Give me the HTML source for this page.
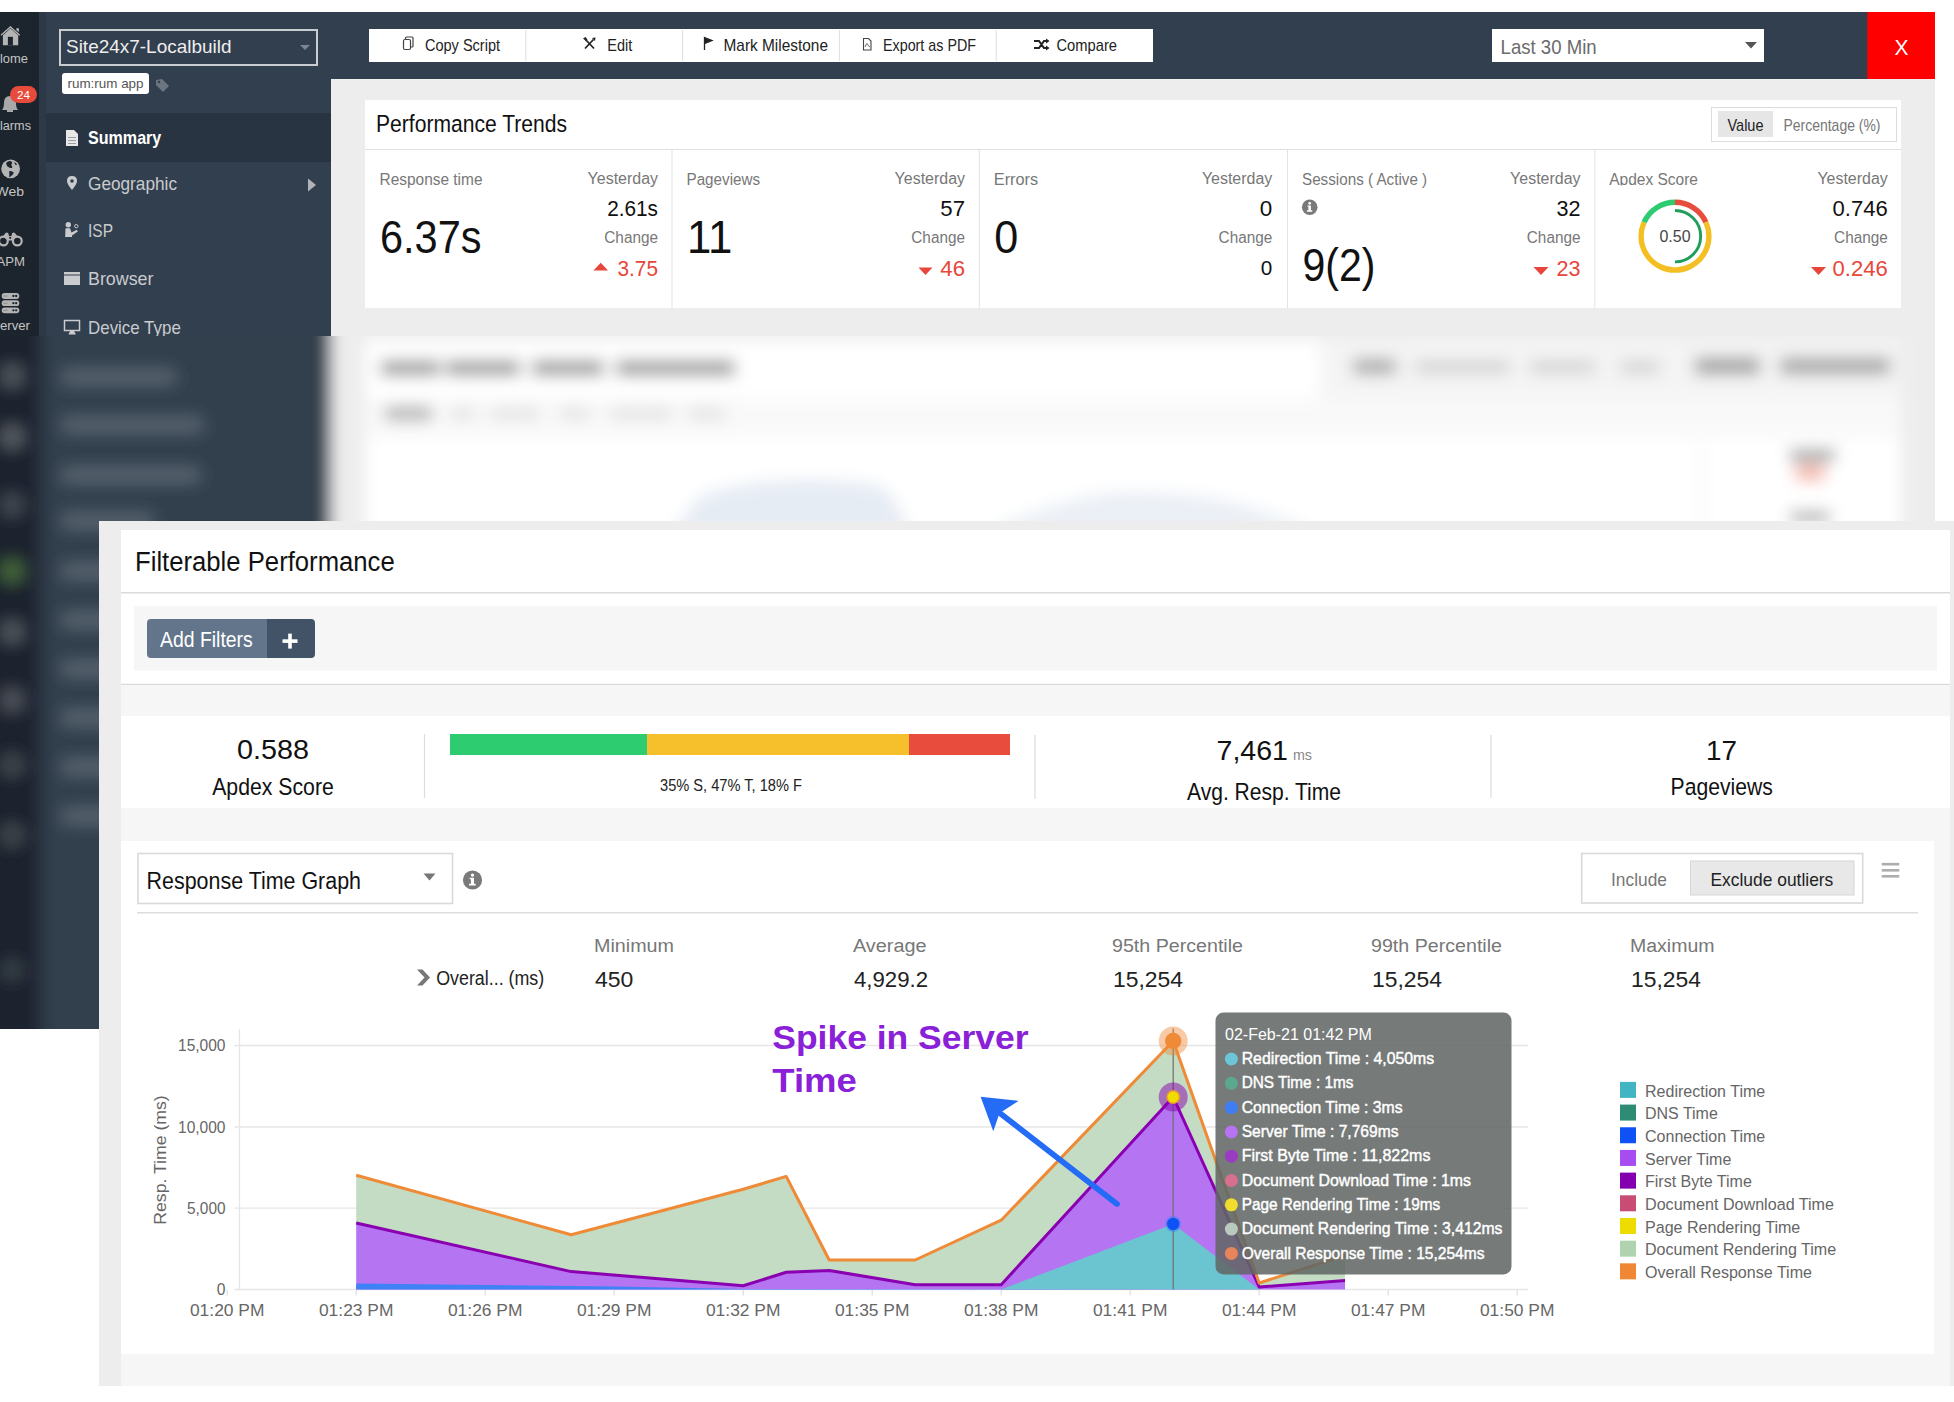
<!DOCTYPE html><html><head><meta charset="utf-8"><title>Site24x7 RUM</title><style>html,body{margin:0;padding:0;background:#fff;overflow:hidden;width:1954px;height:1402px}svg{display:block;font-family:"Liberation Sans",sans-serif}</style></head><body><svg width="1954" height="1402" viewBox="0 0 1954 1402" font-family="Liberation Sans, sans-serif"><rect x="0" y="12" width="1935" height="1017" fill="#323f4e" />
<rect x="0" y="12" width="39" height="1017" fill="#1c242d" />
<rect x="39" y="12" width="7" height="1017" fill="#2d3947" />
<rect x="331" y="79" width="1604" height="950" fill="#ededed" />
<rect x="46" y="113" width="285" height="49" fill="#283441" />
<path d="M2.9 45.3 L2.9 35.2 L10.4 28.6 L18.2 35.2 L18.2 45.3 Z" fill="#b4b4b4" stroke="none" stroke-width="1" />
<rect x="7.9" y="36.8" width="5" height="8.5" fill="#1c242d" />
<path d="M1 35.2 L10.4 27 L19.7 35.2" fill="none" stroke="#b4b4b4" stroke-width="1.4" />
<path d="M16.3 28.2 L18.9 28.2 L18.9 32.2 L16.3 30 Z" fill="#b4b4b4" stroke="none" stroke-width="1" />
<text x="0" y="63" font-size="12.50" fill="#c4c4c4" textLength="28" lengthAdjust="spacingAndGlyphs" >lome</text>
<path d="M2 110 Q4 108 4 103 Q4 96 10 96 Q16 96 16 103 Q16 108 18 110 Z" fill="#a9a9a9" stroke="none" stroke-width="1" />
<rect x="7" y="110" width="6" height="2" fill="#a9a9a9" />
<rect x="10" y="86" width="27" height="17" fill="#e64b3b" rx="8.5" />
<text x="23.5" y="99" font-size="11.50" fill="#fff" text-anchor="middle" textLength="13" lengthAdjust="spacingAndGlyphs" >24</text>
<text x="0" y="130" font-size="12.50" fill="#c4c4c4" textLength="31" lengthAdjust="spacingAndGlyphs" >larms</text>
<circle cx="10.6" cy="168.8" r="9.4" fill="#b4b4b4" />
<path d="M6.5 162.5 Q8 160.8 10.5 161 Q12.5 161.8 12.2 163.5 Q11 164.2 11.5 165.5 Q12.8 166.5 12 168 Q10 168.3 9 167.2 Q7.2 166.8 6.6 165 Q6 163.8 6.5 162.5 Z" fill="#1c242d" stroke="none" stroke-width="1" />
<path d="M9.5 171 Q12 170.6 13.8 172.5 Q13.5 174.5 11.5 175.8 L9.2 177.5 Q9.5 174.5 9.2 172.5 Z" fill="#1c242d" stroke="none" stroke-width="1" />
<path d="M14 162 Q16 162.5 17.2 164.8 L15.5 165 Z" fill="#1c242d" stroke="none" stroke-width="1" />
<text x="-4.5" y="196" font-size="12.50" fill="#c4c4c4" textLength="28.5" lengthAdjust="spacingAndGlyphs" >Web</text>
<circle cx="3.4" cy="241" r="4.4" fill="none" stroke="#b4b4b4" stroke-width="2.2"/>
<circle cx="17.3" cy="241" r="4.4" fill="none" stroke="#b4b4b4" stroke-width="2.2"/>
<path d="M3 236.5 L5.5 233 Q6.8 231.8 8.2 233 L9 236 L11.4 236 L12.2 233 Q13.6 231.8 14.9 233 L17.5 236.5 L12 240.5 L8.5 240.5 Z" fill="#b4b4b4" stroke="none" stroke-width="1" />
<circle cx="10.2" cy="237.8" r="1.1" fill="#1c242d" />
<text x="-3.5" y="265.7" font-size="12.50" fill="#c4c4c4" textLength="28.5" lengthAdjust="spacingAndGlyphs" >APM</text>
<rect x="1.7" y="293.1" width="17.6" height="5.8" fill="#b4b4b4" rx="2.9" />
<circle cx="13.4" cy="296.0" r="1.15" fill="#1c242d" />
<circle cx="16.2" cy="296.0" r="1.15" fill="#1c242d" />
<rect x="3.5" y="295.5" width="4" height="1" fill="#8a8a8a" />
<rect x="1.7" y="300.3" width="17.6" height="5.8" fill="#b4b4b4" rx="2.9" />
<circle cx="13.4" cy="303.2" r="1.15" fill="#1c242d" />
<circle cx="16.2" cy="303.2" r="1.15" fill="#1c242d" />
<rect x="3.5" y="302.7" width="4" height="1" fill="#8a8a8a" />
<rect x="1.7" y="307.4" width="17.6" height="5.8" fill="#b4b4b4" rx="2.9" />
<circle cx="13.4" cy="310.29999999999995" r="1.15" fill="#1c242d" />
<circle cx="16.2" cy="310.29999999999995" r="1.15" fill="#1c242d" />
<rect x="3.5" y="309.79999999999995" width="4" height="1" fill="#8a8a8a" />
<text x="0" y="329.5" font-size="12.50" fill="#c4c4c4" textLength="30" lengthAdjust="spacingAndGlyphs" >erver</text>
<rect x="60" y="30" width="257" height="35" fill="none" stroke="#c9ccd0" stroke-width="2"/>
<text x="66" y="53" font-size="19.04" fill="#eeeeee" textLength="165.5" lengthAdjust="spacingAndGlyphs" >Site24x7-Localbuild</text>
<path d="M300 45 L310 45 L305 50 Z" fill="#7d8690" stroke="none" stroke-width="1" />
<rect x="62" y="73" width="87" height="21" fill="#ffffff" rx="3" />
<text x="67.5" y="88" font-size="13.50" fill="#555" textLength="76" lengthAdjust="spacingAndGlyphs" >rum:rum app</text>
<path d="M156 80 L162 79 L169 86 L163 92 L156 85 Z" fill="#6b7580" stroke="none" stroke-width="1" />
<circle cx="159" cy="82" r="1.2" fill="#323f4e" />
<text x="88" y="144" font-size="17.73" fill="#ffffff" textLength="73.3" lengthAdjust="spacingAndGlyphs" font-weight="bold" >Summary</text>
<path d="M66 130 L74 130 L78 134 L78 146 L66 146 Z" fill="#e8e8e8" stroke="none" stroke-width="1" />
<rect x="68" y="137" width="8" height="1" fill="#9aa0a6" />
<rect x="68" y="140" width="8" height="1" fill="#9aa0a6" />
<rect x="68" y="143" width="8" height="1" fill="#9aa0a6" />
<text x="88" y="190" font-size="17.73" fill="#c9cbce" textLength="89" lengthAdjust="spacingAndGlyphs" >Geographic</text>
<path d="M72 176 Q77 176 77 181 Q77 184 72 190 Q67 184 67 181 Q67 176 72 176 Z" fill="#c9cbce" stroke="none" stroke-width="1" />
<circle cx="72" cy="181" r="1.8" fill="#323f4e" />
<path d="M308 178.5 L316 185 L308 191.5 Z" fill="#b0b4b8" stroke="none" stroke-width="1" />
<text x="88" y="237" font-size="17.73" fill="#c9cbce" textLength="25" lengthAdjust="spacingAndGlyphs" >ISP</text>
<circle cx="68.3" cy="224.8" r="2.7" fill="#c9cbce" />
<path d="M65.5 228.2 L70 228.2 L71.5 232.5 L76.8 229.8 L77.8 231.4 L72 235.5 L72 237 L65.2 237 Z" fill="#c9cbce" stroke="none" stroke-width="1" />
<circle cx="76.3" cy="226.2" r="1.7" fill="none" stroke="#c9cbce" stroke-width="1"/>
<text x="88" y="285" font-size="17.73" fill="#c9cbce" textLength="65.5" lengthAdjust="spacingAndGlyphs" >Browser</text>
<rect x="64" y="272" width="16" height="13" fill="#c9cbce" />
<rect x="64" y="274.5" width="16" height="1" fill="#323f4e" />
<text x="88" y="334" font-size="17.73" fill="#c9cbce" textLength="92.8" lengthAdjust="spacingAndGlyphs" >Device Type</text>
<rect x="64.5" y="320.5" width="15" height="10" fill="none" stroke="#c9cbce" stroke-width="1.5"/>
<path d="M70 331 L74 331 L76 334.6 L68.5 334.6 Z" fill="#c9cbce" stroke="none" stroke-width="1" />
<rect x="369" y="29" width="784" height="33" fill="#ffffff" />
<line x1="525.8" y1="30" x2="525.8" y2="61" stroke="#dedede" stroke-width="1" />
<line x1="682.6" y1="30" x2="682.6" y2="61" stroke="#dedede" stroke-width="1" />
<line x1="839.4000000000001" y1="30" x2="839.4000000000001" y2="61" stroke="#dedede" stroke-width="1" />
<line x1="996.2" y1="30" x2="996.2" y2="61" stroke="#dedede" stroke-width="1" />
<text x="425" y="50.8" font-size="15.99" fill="#222" textLength="75" lengthAdjust="spacingAndGlyphs" >Copy Script</text>
<text x="607.3" y="50.8" font-size="15.99" fill="#222" textLength="25" lengthAdjust="spacingAndGlyphs" >Edit</text>
<text x="723.5" y="50.8" font-size="15.99" fill="#222" textLength="104.5" lengthAdjust="spacingAndGlyphs" >Mark Milestone</text>
<text x="883" y="50.8" font-size="15.99" fill="#222" textLength="93" lengthAdjust="spacingAndGlyphs" >Export as PDF</text>
<text x="1056.5" y="50.8" font-size="15.99" fill="#222" textLength="60.5" lengthAdjust="spacingAndGlyphs" >Compare</text>
<rect x="403.5" y="39.5" width="7" height="10" fill="#fff" rx="1.5" stroke="#444" stroke-width="1.2"/>
<path d="M405.5 39.5 L405.5 38 Q405.5 37 406.5 37 L412 37 Q413 37 413 38 L413 46 Q413 47 412 47 L410.5 47" fill="none" stroke="#444" stroke-width="1.2" />
<path d="M585.5 39.5 L594 48.5 M585 48.5 L593.5 39.5" fill="none" stroke="#222" stroke-width="1.7" />
<path d="M583 38.5 L585.5 37 L587.5 39.5 L586 41 Z M592 38 L595.5 37.5 L595 41 Z" fill="#222" stroke="none" stroke-width="1" />
<path d="M704.5 37 L704.5 50 M704.5 37.5 L712 40.5 L704.5 43.5 Z" fill="#222" stroke="#222" stroke-width="1.3" />
<path d="M863.5 38.5 L868.5 38.5 L871 41 L871 50 L863.5 50 Z" fill="none" stroke="#444" stroke-width="1.1" />
<path d="M865 47 Q867 42 867.5 44 Q868 46 870 47" fill="none" stroke="#444" stroke-width="0.8" />
<path d="M1034 41 L1039 41 L1044 48 L1048 48 M1034 48 L1039 48 L1044 41 L1048 41" fill="none" stroke="#222" stroke-width="2" />
<path d="M1046 38.5 L1049.5 41 L1046 43.5 Z M1046 45.5 L1049.5 48 L1046 50.5 Z" fill="#222" stroke="none" stroke-width="1" />
<rect x="1492" y="29" width="272" height="33" fill="#ffffff" />
<text x="1500.6" y="53.5" font-size="20.06" fill="#6b6b6b" textLength="96" lengthAdjust="spacingAndGlyphs" >Last 30 Min</text>
<path d="M1745 42 L1757 42 L1751 48.5 Z" fill="#555" stroke="none" stroke-width="1" />
<rect x="1867.3" y="12" width="67.7" height="67" fill="#ff0000" />
<text x="1901.5" y="55" font-size="22.97" fill="#ffffff" text-anchor="middle" textLength="14" lengthAdjust="spacingAndGlyphs" >X</text>
<rect x="365" y="100" width="1536" height="208" fill="#ffffff" />
<text x="376" y="132" font-size="23.55" fill="#111" textLength="191" lengthAdjust="spacingAndGlyphs" >Performance Trends</text>
<line x1="365" y1="149.5" x2="1901" y2="149.5" stroke="#e0e0e0" stroke-width="1" />
<line x1="672" y1="150" x2="672" y2="308" stroke="#e3e3e3" stroke-width="1" />
<line x1="979.3" y1="150" x2="979.3" y2="308" stroke="#e3e3e3" stroke-width="1" />
<line x1="1287.5" y1="150" x2="1287.5" y2="308" stroke="#e3e3e3" stroke-width="1" />
<line x1="1594.8" y1="150" x2="1594.8" y2="308" stroke="#e3e3e3" stroke-width="1" />
<rect x="1711.5" y="107.5" width="185" height="34" fill="#fff" stroke="#dcdcdc" stroke-width="1"/>
<rect x="1718" y="111" width="55" height="26" fill="#e6e6e6" />
<text x="1727.5" y="130.5" font-size="15.70" fill="#222" textLength="36" lengthAdjust="spacingAndGlyphs" >Value</text>
<text x="1783.5" y="130.5" font-size="15.70" fill="#777" textLength="97" lengthAdjust="spacingAndGlyphs" >Percentage (%)</text>
<text x="379.5" y="185" font-size="16.42" fill="#777" textLength="103" lengthAdjust="spacingAndGlyphs" >Response time</text>
<text x="658" y="184" font-size="16.42" fill="#777" text-anchor="end" textLength="70.4" lengthAdjust="spacingAndGlyphs" >Yesterday</text>
<text x="658" y="216" font-size="21.37" fill="#111" text-anchor="end" textLength="50.8" lengthAdjust="spacingAndGlyphs" >2.61s</text>
<text x="658" y="243" font-size="16.42" fill="#777" text-anchor="end" textLength="53.7" lengthAdjust="spacingAndGlyphs" >Change</text>
<text x="658" y="276" font-size="22.53" fill="#e8463a" text-anchor="end" textLength="40.5" lengthAdjust="spacingAndGlyphs" >3.75</text>
<text x="380" y="253" font-size="45.93" fill="#111" textLength="101.5" lengthAdjust="spacingAndGlyphs" >6.37s</text>
<path d="M593.5 270.5 L608 270.5 L600.75 262.8 Z" fill="#e8463a" stroke="none" stroke-width="1" />
<text x="686.5" y="185" font-size="16.42" fill="#777" textLength="73.6" lengthAdjust="spacingAndGlyphs" >Pageviews</text>
<text x="965" y="184" font-size="16.42" fill="#777" text-anchor="end" textLength="70.4" lengthAdjust="spacingAndGlyphs" >Yesterday</text>
<text x="965" y="216" font-size="21.37" fill="#111" text-anchor="end" textLength="24.7" lengthAdjust="spacingAndGlyphs" >57</text>
<text x="965" y="243" font-size="16.42" fill="#777" text-anchor="end" textLength="53.7" lengthAdjust="spacingAndGlyphs" >Change</text>
<text x="965" y="276" font-size="22.53" fill="#e8463a" text-anchor="end" textLength="24.7" lengthAdjust="spacingAndGlyphs" >46</text>
<text x="687" y="253" font-size="45.93" fill="#111" textLength="45.4" lengthAdjust="spacingAndGlyphs" >11</text>
<path d="M918.5 267.5 L932.5 267.5 L925.5 275 Z" fill="#e8463a" stroke="none" stroke-width="1" />
<text x="993.8" y="185" font-size="16.42" fill="#777" textLength="44.4" lengthAdjust="spacingAndGlyphs" >Errors</text>
<text x="1272.3" y="184" font-size="16.42" fill="#777" text-anchor="end" textLength="70.4" lengthAdjust="spacingAndGlyphs" >Yesterday</text>
<text x="1272.3" y="216" font-size="21.37" fill="#111" text-anchor="end" textLength="12.5" lengthAdjust="spacingAndGlyphs" >0</text>
<text x="1272.3" y="243" font-size="16.42" fill="#777" text-anchor="end" textLength="53.7" lengthAdjust="spacingAndGlyphs" >Change</text>
<text x="1272.3" y="275" font-size="19.62" fill="#111" text-anchor="end" textLength="11.5" lengthAdjust="spacingAndGlyphs" >0</text>
<text x="994.3" y="253" font-size="45.93" fill="#111" textLength="24" lengthAdjust="spacingAndGlyphs" >0</text>
<text x="1302.0" y="185" font-size="16.42" fill="#777" textLength="125.2" lengthAdjust="spacingAndGlyphs" >Sessions ( Active )</text>
<text x="1580.5" y="184" font-size="16.42" fill="#777" text-anchor="end" textLength="70.4" lengthAdjust="spacingAndGlyphs" >Yesterday</text>
<text x="1580.5" y="216" font-size="21.37" fill="#111" text-anchor="end" textLength="24" lengthAdjust="spacingAndGlyphs" >32</text>
<text x="1580.5" y="243" font-size="16.42" fill="#777" text-anchor="end" textLength="53.7" lengthAdjust="spacingAndGlyphs" >Change</text>
<text x="1580.5" y="276" font-size="22.53" fill="#e8463a" text-anchor="end" textLength="24" lengthAdjust="spacingAndGlyphs" >23</text>
<text x="1302.5" y="281.4" font-size="45.93" fill="#111" textLength="73" lengthAdjust="spacingAndGlyphs" >9(2)</text>
<circle cx="1309.7" cy="207.3" r="7.8" fill="#7a7a7a" />
<circle cx="1309.7" cy="203.3" r="1.35" fill="#fff" />
<path d="M1307.40 205.40 L1310.90 205.40 L1310.90 210.30 L1312.30 210.30 L1312.30 211.70 L1306.90 211.70 L1306.90 210.30 L1308.40 210.30 L1308.40 206.60 L1307.40 206.60 Z" fill="#fff" stroke="none" stroke-width="1" />
<path d="M1533.5 267 L1548.5 267 L1541 275 Z" fill="#e8463a" stroke="none" stroke-width="1" />
<clipPath id="apc"><rect x="1595" y="150" width="120" height="35.6"/></clipPath>
<text x="1609.3" y="185" font-size="16.42" fill="#777" textLength="88.6" lengthAdjust="spacingAndGlyphs" clip-path="url(#apc)">Apdex Score</text>
<text x="1887.8" y="184" font-size="16.42" fill="#777" text-anchor="end" textLength="70.4" lengthAdjust="spacingAndGlyphs" >Yesterday</text>
<text x="1887.8" y="216" font-size="21.37" fill="#111" text-anchor="end" textLength="55.2" lengthAdjust="spacingAndGlyphs" >0.746</text>
<text x="1887.8" y="243" font-size="16.42" fill="#777" text-anchor="end" textLength="53.7" lengthAdjust="spacingAndGlyphs" >Change</text>
<text x="1887.8" y="276" font-size="22.53" fill="#e8463a" text-anchor="end" textLength="55.2" lengthAdjust="spacingAndGlyphs" >0.246</text>
<path d="M1811 267 L1826 267 L1818.5 275 Z" fill="#e8463a" stroke="none" stroke-width="1" />
<path d="M1675.00 202.30 A33.9 33.9 0 0 1 1705.90 222.25" fill="none" stroke="#e74c3c" stroke-width="5.4" />
<path d="M1705.90 222.25 A33.9 33.9 0 1 1 1644.10 222.25" fill="none" stroke="#f4bf22" stroke-width="5.4" />
<path d="M1644.10 222.25 A33.9 33.9 0 0 1 1675.00 202.30" fill="none" stroke="#2ecc71" stroke-width="5.4" />
<path d="M1675.00 210.50 A25.7 25.7 0 0 1 1675.00 261.90" fill="none" stroke="#1e9e5a" stroke-width="2.9" />
<text x="1675" y="241.8" font-size="16.42" fill="#444" text-anchor="middle" textLength="31" lengthAdjust="spacingAndGlyphs" >0.50</text>
<defs><filter id="bl" x="-5%" y="-5%" width="110%" height="110%"><feGaussianBlur stdDeviation="8"/></filter><clipPath id="blc"><rect x="0" y="336" width="1935" height="692.5"/></clipPath><clipPath id="chartclip"><rect x="239.5" y="1000" width="1105.7" height="300"/></clipPath></defs>
<g clip-path="url(#blc)"><g filter="url(#bl)">
<rect x="-40" y="12" width="2015" height="1057" fill="#323f4e" />
<rect x="-40" y="12" width="79" height="1057" fill="#1c242d" />
<rect x="39" y="12" width="7" height="1057" fill="#2d3947" />
<rect x="331" y="79" width="1644" height="990" fill="#ededed" />
<rect x="39" y="12" width="7" height="1017" fill="#2d3947" />
<rect x="62" y="370" width="113" height="14" fill="#5a6672" rx="3" />
<rect x="62" y="418" width="140" height="14" fill="#5a6672" rx="3" />
<rect x="62" y="468" width="137" height="14" fill="#5a6672" rx="3" />
<rect x="62" y="514" width="90" height="14" fill="#5a6672" rx="3" />
<rect x="62" y="564" width="120" height="14" fill="#5a6672" rx="3" />
<rect x="62" y="613" width="130" height="14" fill="#5a6672" rx="3" />
<rect x="62" y="662" width="120" height="14" fill="#5a6672" rx="3" />
<rect x="62" y="711" width="130" height="14" fill="#5a6672" rx="3" />
<rect x="62" y="760" width="120" height="14" fill="#5a6672" rx="3" />
<rect x="62" y="809" width="90" height="14" fill="#5a6672" rx="3" />
<rect x="1" y="365" width="22" height="22" fill="#50575f" rx="5" />
<rect x="1" y="426" width="22" height="22" fill="#575d65" rx="5" />
<rect x="1" y="494" width="22" height="22" fill="#434a52" rx="5" />
<rect x="1" y="560" width="22" height="22" fill="#44663a" rx="5" />
<rect x="1" y="621" width="22" height="22" fill="#50565e" rx="5" />
<rect x="1" y="689" width="22" height="22" fill="#4d535b" rx="5" />
<rect x="1" y="754" width="22" height="22" fill="#40464d" rx="5" />
<rect x="1" y="824" width="22" height="22" fill="#40464d" rx="5" />
<rect x="1" y="959" width="22" height="22" fill="#363c44" rx="5" />
<rect x="365" y="340" width="1536" height="700" fill="#ffffff" />
<rect x="365" y="398" width="1536" height="40" fill="#f9f9f9" />
<rect x="1320" y="340" width="581" height="58" fill="#f4f4f4" />
<rect x="381" y="361" width="59" height="14" fill="#8a8a8a" rx="2" />
<rect x="446" y="361" width="74" height="14" fill="#8a8a8a" rx="2" />
<rect x="532" y="361" width="72" height="14" fill="#8a8a8a" rx="2" />
<rect x="616" y="361" width="119" height="14" fill="#8a8a8a" rx="2" />
<rect x="385" y="407" width="47" height="13" fill="#a8a8a8" rx="2" />
<rect x="450" y="409" width="25" height="9" fill="#dadada" rx="2" />
<rect x="490" y="409" width="50" height="9" fill="#dadada" rx="2" />
<rect x="560" y="409" width="30" height="9" fill="#dadada" rx="2" />
<rect x="610" y="409" width="62" height="9" fill="#dadada" rx="2" />
<rect x="688" y="409" width="37" height="9" fill="#dadada" rx="2" />
<rect x="1353" y="359" width="43" height="15" fill="#a5a5a5" rx="2" />
<rect x="1415" y="362" width="95" height="10" fill="#c8c8c8" rx="2" />
<rect x="1530" y="362" width="65" height="10" fill="#c8c8c8" rx="2" />
<rect x="1620" y="362" width="40" height="10" fill="#c8c8c8" rx="2" />
<rect x="1695" y="358" width="65" height="16" fill="#9a9a9a" rx="2" />
<rect x="1780" y="358" width="110" height="16" fill="#a0a0a0" rx="2" />
<rect x="1700" y="445" width="2" height="90" fill="#e6e6e6" />
<rect x="1790" y="450" width="45" height="11" fill="#8a8a8a" rx="2" />
<rect x="1795" y="466" width="30" height="14" fill="#f4a89a" rx="2" />
<rect x="1790" y="512" width="40" height="10" fill="#999" rx="2" />
<path d="M670 535 L700 495 Q780 470 880 485 Q900 500 910 535 Z" fill="#e6ecf4" stroke="none" stroke-width="1" />
<path d="M980 535 Q1050 500 1110 492 Q1230 486 1320 535 Z" fill="#ebf0f6" stroke="none" stroke-width="1" />
</g></g>
<rect x="99" y="521" width="1855" height="865" fill="#ededed" />
<rect x="121" y="530" width="1829" height="856" fill="#ffffff" />
<text x="135" y="571.3" font-size="27.62" fill="#111" textLength="259.7" lengthAdjust="spacingAndGlyphs" >Filterable Performance</text>
<line x1="121" y1="592.8" x2="1950" y2="592.8" stroke="#dadada" stroke-width="1.5" />
<rect x="134" y="606" width="1803" height="64.5" fill="#f6f6f6" />
<clipPath id="afc"><rect x="147" y="619" width="168" height="39" rx="4"/></clipPath>
<g clip-path="url(#afc)">
<rect x="147" y="619" width="120" height="39" fill="#63758b" />
<rect x="267" y="619" width="48" height="39" fill="#425367" />
</g>
<text x="160" y="647.4" font-size="21.80" fill="#ffffff" textLength="92.8" lengthAdjust="spacingAndGlyphs" >Add Filters</text>
<rect x="282.5" y="639.3" width="15" height="3.6" fill="#fff" />
<rect x="288.2" y="633.6" width="3.6" height="15" fill="#fff" />
<line x1="121" y1="684.5" x2="1950" y2="684.5" stroke="#dadada" stroke-width="1.5" />
<rect x="121" y="685" width="1829" height="31" fill="#f6f6f6" />
<rect x="121" y="808" width="1829" height="33" fill="#f6f6f6" />
<text x="273" y="759.3" font-size="28.49" fill="#111" text-anchor="middle" textLength="72" lengthAdjust="spacingAndGlyphs" >0.588</text>
<text x="273" y="795.3" font-size="23.26" fill="#111" text-anchor="middle" textLength="121.6" lengthAdjust="spacingAndGlyphs" >Apdex Score</text>
<line x1="424.5" y1="734" x2="424.5" y2="798" stroke="#dddddd" stroke-width="1.2" />
<rect x="450" y="734" width="197" height="21" fill="#2ecc71" />
<rect x="647" y="734" width="262" height="21" fill="#f5c02b" />
<rect x="909" y="734" width="101" height="21" fill="#e74c3c" />
<text x="660" y="790.6" font-size="17.01" fill="#222" textLength="142" lengthAdjust="spacingAndGlyphs" >35% S, 47% T, 18% F</text>
<line x1="1035" y1="735" x2="1035" y2="799" stroke="#dddddd" stroke-width="1.2" />
<text x="1216.5" y="760" font-size="28.49" fill="#111" textLength="71.5" lengthAdjust="spacingAndGlyphs" >7,461</text>
<text x="1293" y="760" font-size="15.50" fill="#888" textLength="19" lengthAdjust="spacingAndGlyphs" >ms</text>
<text x="1187" y="800" font-size="23.26" fill="#111" textLength="154" lengthAdjust="spacingAndGlyphs" >Avg. Resp. Time</text>
<line x1="1491" y1="735" x2="1491" y2="798" stroke="#dddddd" stroke-width="1.2" />
<text x="1706" y="760" font-size="28.49" fill="#111" textLength="31" lengthAdjust="spacingAndGlyphs" >17</text>
<text x="1670.6" y="795" font-size="23.26" fill="#111" textLength="102.2" lengthAdjust="spacingAndGlyphs" >Pageviews</text>
<rect x="1934" y="841" width="16" height="545" fill="#f6f6f6" />
<rect x="121" y="1354" width="1829" height="32" fill="#f6f6f6" />
<rect x="138" y="853.5" width="314.5" height="50" fill="#fff" stroke="#d9d9d9" stroke-width="1.6"/>
<text x="146.6" y="888.5" font-size="24.42" fill="#111" textLength="214.4" lengthAdjust="spacingAndGlyphs" >Response Time Graph</text>
<path d="M423.5 873.5 L435.5 873.5 L429.5 880.5 Z" fill="#777" stroke="none" stroke-width="1" />
<circle cx="472.5" cy="880" r="9.6" fill="#7a7a7a" />
<circle cx="472.5" cy="875.08" r="1.6605" fill="#fff" />
<path d="M469.67 877.66 L473.98 877.66 L473.98 883.69 L475.70 883.69 L475.70 885.41 L469.06 885.41 L469.06 883.69 L470.90 883.69 L470.90 879.14 L469.67 879.14 Z" fill="#fff" stroke="none" stroke-width="1" />
<line x1="137" y1="912.8" x2="1918" y2="912.8" stroke="#dddddd" stroke-width="1.6" />
<rect x="1581.7" y="853.5" width="281" height="49.5" fill="#fff" stroke="#d9d9d9" stroke-width="1.6"/>
<rect x="1690.5" y="861" width="163.5" height="34" fill="#e8e8e8" stroke="#d6d6d6" stroke-width="1"/>
<text x="1611" y="886.2" font-size="18.60" fill="#777" textLength="56" lengthAdjust="spacingAndGlyphs" >Include</text>
<text x="1710.5" y="886.2" font-size="18.60" fill="#222" textLength="122.8" lengthAdjust="spacingAndGlyphs" >Exclude outliers</text>
<rect x="1881.7" y="862.9000000000001" width="17.6" height="2.6" fill="#adadad" />
<rect x="1881.7" y="869.0" width="17.6" height="2.6" fill="#adadad" />
<rect x="1881.7" y="875.0" width="17.6" height="2.6" fill="#adadad" />
<text x="436.2" y="985.4" font-size="19.33" fill="#222" textLength="108" lengthAdjust="spacingAndGlyphs" >Overal... (ms)</text>
<path d="M417 969.5 L422.5 969.5 L430 977.5 L422.5 985.5 L417 985.5 L424.5 977.5 Z" fill="#777" stroke="none" stroke-width="1" />
<text x="594" y="952.2" font-size="19.19" fill="#777" textLength="80" lengthAdjust="spacingAndGlyphs" >Minimum</text>
<text x="595" y="986.8" font-size="21.37" fill="#222" textLength="38.4" lengthAdjust="spacingAndGlyphs" >450</text>
<text x="853" y="952.2" font-size="19.19" fill="#777" textLength="73.5" lengthAdjust="spacingAndGlyphs" >Average</text>
<text x="854" y="986.8" font-size="21.37" fill="#222" textLength="74" lengthAdjust="spacingAndGlyphs" >4,929.2</text>
<text x="1112" y="952.2" font-size="19.19" fill="#777" textLength="131" lengthAdjust="spacingAndGlyphs" >95th Percentile</text>
<text x="1113" y="986.8" font-size="21.37" fill="#222" textLength="70" lengthAdjust="spacingAndGlyphs" >15,254</text>
<text x="1371" y="952.2" font-size="19.19" fill="#777" textLength="131" lengthAdjust="spacingAndGlyphs" >99th Percentile</text>
<text x="1372" y="986.8" font-size="21.37" fill="#222" textLength="70" lengthAdjust="spacingAndGlyphs" >15,254</text>
<text x="1630" y="952.2" font-size="19.19" fill="#777" textLength="84.5" lengthAdjust="spacingAndGlyphs" >Maximum</text>
<text x="1631" y="986.8" font-size="21.37" fill="#222" textLength="70" lengthAdjust="spacingAndGlyphs" >15,254</text>
<line x1="234.5" y1="1045.5" x2="1528" y2="1045.5" stroke="#e6e6e6" stroke-width="1.3" />
<text x="225.5" y="1051.1" font-size="15.84" fill="#666" text-anchor="end" textLength="47.5" lengthAdjust="spacingAndGlyphs" font-family="Liberation Sans" >15,000</text>
<line x1="234.5" y1="1127" x2="1528" y2="1127" stroke="#e6e6e6" stroke-width="1.3" />
<text x="225.5" y="1132.6" font-size="15.84" fill="#666" text-anchor="end" textLength="47.5" lengthAdjust="spacingAndGlyphs" font-family="Liberation Sans" >10,000</text>
<line x1="234.5" y1="1208.2" x2="1528" y2="1208.2" stroke="#e6e6e6" stroke-width="1.3" />
<text x="225.5" y="1213.8" font-size="15.84" fill="#666" text-anchor="end" textLength="38.5" lengthAdjust="spacingAndGlyphs" font-family="Liberation Sans" >5,000</text>
<line x1="234.5" y1="1289.5" x2="1528" y2="1289.5" stroke="#e6e6e6" stroke-width="1.3" />
<text x="225.5" y="1295.1" font-size="15.84" fill="#666" text-anchor="end" textLength="8.7" lengthAdjust="spacingAndGlyphs" font-family="Liberation Sans" >0</text>
<line x1="239.5" y1="1029" x2="239.5" y2="1290" stroke="#e6e6e6" stroke-width="1.3" />
<line x1="227.2" y1="1289.5" x2="227.2" y2="1295.5" stroke="#e0e0e0" stroke-width="1.3" />
<text x="227.2" y="1315.6" font-size="16.86" fill="#666" text-anchor="middle" textLength="74.5" lengthAdjust="spacingAndGlyphs" >01:20 PM</text>
<line x1="356.2" y1="1289.5" x2="356.2" y2="1295.5" stroke="#e0e0e0" stroke-width="1.3" />
<text x="356.2" y="1315.6" font-size="16.86" fill="#666" text-anchor="middle" textLength="74.5" lengthAdjust="spacingAndGlyphs" >01:23 PM</text>
<line x1="485.2" y1="1289.5" x2="485.2" y2="1295.5" stroke="#e0e0e0" stroke-width="1.3" />
<text x="485.2" y="1315.6" font-size="16.86" fill="#666" text-anchor="middle" textLength="74.5" lengthAdjust="spacingAndGlyphs" >01:26 PM</text>
<line x1="614.2" y1="1289.5" x2="614.2" y2="1295.5" stroke="#e0e0e0" stroke-width="1.3" />
<text x="614.2" y="1315.6" font-size="16.86" fill="#666" text-anchor="middle" textLength="74.5" lengthAdjust="spacingAndGlyphs" >01:29 PM</text>
<line x1="743.2" y1="1289.5" x2="743.2" y2="1295.5" stroke="#e0e0e0" stroke-width="1.3" />
<text x="743.2" y="1315.6" font-size="16.86" fill="#666" text-anchor="middle" textLength="74.5" lengthAdjust="spacingAndGlyphs" >01:32 PM</text>
<line x1="872.2" y1="1289.5" x2="872.2" y2="1295.5" stroke="#e0e0e0" stroke-width="1.3" />
<text x="872.2" y="1315.6" font-size="16.86" fill="#666" text-anchor="middle" textLength="74.5" lengthAdjust="spacingAndGlyphs" >01:35 PM</text>
<line x1="1001.2" y1="1289.5" x2="1001.2" y2="1295.5" stroke="#e0e0e0" stroke-width="1.3" />
<text x="1001.2" y="1315.6" font-size="16.86" fill="#666" text-anchor="middle" textLength="74.5" lengthAdjust="spacingAndGlyphs" >01:38 PM</text>
<line x1="1130.2" y1="1289.5" x2="1130.2" y2="1295.5" stroke="#e0e0e0" stroke-width="1.3" />
<text x="1130.2" y="1315.6" font-size="16.86" fill="#666" text-anchor="middle" textLength="74.5" lengthAdjust="spacingAndGlyphs" >01:41 PM</text>
<line x1="1259.2" y1="1289.5" x2="1259.2" y2="1295.5" stroke="#e0e0e0" stroke-width="1.3" />
<text x="1259.2" y="1315.6" font-size="16.86" fill="#666" text-anchor="middle" textLength="74.5" lengthAdjust="spacingAndGlyphs" >01:44 PM</text>
<line x1="1388.2" y1="1289.5" x2="1388.2" y2="1295.5" stroke="#e0e0e0" stroke-width="1.3" />
<text x="1388.2" y="1315.6" font-size="16.86" fill="#666" text-anchor="middle" textLength="74.5" lengthAdjust="spacingAndGlyphs" >01:47 PM</text>
<line x1="1517.2" y1="1289.5" x2="1517.2" y2="1295.5" stroke="#e0e0e0" stroke-width="1.3" />
<text x="1517.2" y="1315.6" font-size="16.86" fill="#666" text-anchor="middle" textLength="74.5" lengthAdjust="spacingAndGlyphs" >01:50 PM</text>
<text x="0" y="0" font-size="17.3" fill="#666" text-anchor="middle" textLength="129.5" lengthAdjust="spacingAndGlyphs" transform="translate(165.8 1160) rotate(-90)">Resp. Time (ms)</text>
<g clip-path="url(#chartclip)">
<path d="M356.2,1175.3 571.2,1234.7 743.2,1189.3 786.2,1176.4 829.2,1260.0 915.2,1260.0 1001.2,1220.2 1173.2,1041.0 1259.2,1283.0 1345.2,1255.3 L1345.2,1280.5 1259.2,1287.0 1173.2,1097.0 1001.2,1284.7 915.2,1284.7 829.2,1270.4 786.2,1272.3 743.2,1285.8 571.2,1271.6 356.2,1223.0 Z" fill="#c3dcc3" stroke="none" stroke-width="1" />
<path d="M356.2,1223.0 571.2,1271.6 743.2,1285.8 786.2,1272.3 829.2,1270.4 915.2,1284.7 1001.2,1284.7 1173.2,1097.0 1259.2,1287.0 1345.2,1280.5 L1345.2,1289.5 356.2,1289.5 Z" fill="#b574f2" stroke="none" stroke-width="1" />
<path d="M356.2,1289.5 1001.2,1289.5 1173.2,1224.0 1259.2,1289.5 1345.2,1289.5 L1345.2,1289.5 356.2,1289.5 Z" fill="#6bc5d0" stroke="none" stroke-width="1" />
<path d="M356.2,1283.4 485.2,1285.0 614.2,1286.6 743.2,1289.0 1345.2,1289.5 L1345.2,1289.5 356.2,1289.5 Z" fill="#3f82f5" stroke="none" stroke-width="1" />
<path d="M356.2,1223.0 571.2,1271.6 743.2,1285.8 786.2,1272.3 829.2,1270.4 915.2,1284.7 1001.2,1284.7 1173.2,1097.0 1259.2,1287.0 1345.2,1280.5" fill="none" stroke="#8a00b0" stroke-width="3" stroke-linejoin="round"/>
<path d="M356.2,1175.3 571.2,1234.7 743.2,1189.3 786.2,1176.4 829.2,1260.0 915.2,1260.0 1001.2,1220.2 1173.2,1041.0 1259.2,1283.0 1345.2,1255.3" fill="none" stroke="#ef8a37" stroke-width="3" stroke-linejoin="round"/>
</g>
<line x1="1173.2" y1="1028.5" x2="1173.2" y2="1289.5" stroke="#6e6e6e" stroke-width="1.2" />
<circle cx="1173.2" cy="1041" r="14.5" fill="#ef8a37" opacity="0.45"/>
<circle cx="1173.2" cy="1041" r="8.2" fill="#ef8a37" />
<circle cx="1173.2" cy="1097" r="14.5" fill="#8a00b0" opacity="0.5"/>
<circle cx="1173.2" cy="1097" r="7" fill="#e99a33" />
<circle cx="1173.2" cy="1097" r="5.5" fill="#f0dc00" />
<circle cx="1173.2" cy="1224" r="8" fill="#3f82f5" opacity="0.5"/>
<circle cx="1173.2" cy="1224" r="6.2" fill="#0d52f5" />
<text x="772.3" y="1048.8" font-size="33.14" fill="#8a20d8" textLength="256.2" lengthAdjust="spacingAndGlyphs" font-weight="bold" >Spike in Server</text>
<text x="772.3" y="1092.4" font-size="33.14" fill="#8a20d8" textLength="84.5" lengthAdjust="spacingAndGlyphs" font-weight="bold" >Time</text>
<line x1="1117" y1="1204" x2="1001" y2="1114" stroke="#246bf5" stroke-width="5.8" stroke-linecap="round"/>
<path d="M980.6 1096.7 L1018.5 1100.9 L999.5 1113.2 L993.3 1131.2 Z" fill="#246bf5" stroke="none" stroke-width="1" />
<rect x="1215.5" y="1012.6" width="296" height="261.8" fill="rgba(98,102,101,0.87)" rx="8" />
<text x="1225" y="1040" font-size="17.30" fill="#ffffff" textLength="146.8" lengthAdjust="spacingAndGlyphs" >02-Feb-21 01:42 PM</text>
<circle cx="1231.4" cy="1059.0" r="6.5" fill="#6cc6d8" />
<text x="1241.7" y="1064.1" font-size="17.01" fill="#ffffff" textLength="192.4" lengthAdjust="spacingAndGlyphs" stroke="#ffffff" stroke-width="0.45">Redirection Time : 4,050ms</text>
<circle cx="1231.4" cy="1083.3" r="6.5" fill="#5aa88f" />
<text x="1241.7" y="1088.3999999999999" font-size="17.01" fill="#ffffff" textLength="111.8" lengthAdjust="spacingAndGlyphs" stroke="#ffffff" stroke-width="0.45">DNS Time : 1ms</text>
<circle cx="1231.4" cy="1107.6" r="6.5" fill="#3e7ef5" />
<text x="1241.7" y="1112.6999999999998" font-size="17.01" fill="#ffffff" textLength="160.9" lengthAdjust="spacingAndGlyphs" stroke="#ffffff" stroke-width="0.45">Connection Time : 3ms</text>
<circle cx="1231.4" cy="1131.9" r="6.5" fill="#b873f2" />
<text x="1241.7" y="1137.0" font-size="17.01" fill="#ffffff" textLength="156.8" lengthAdjust="spacingAndGlyphs" stroke="#ffffff" stroke-width="0.45">Server Time : 7,769ms</text>
<circle cx="1231.4" cy="1156.2" r="6.5" fill="#9a3cc2" />
<text x="1241.7" y="1161.3" font-size="17.01" fill="#ffffff" textLength="188.7" lengthAdjust="spacingAndGlyphs" stroke="#ffffff" stroke-width="0.45">First Byte Time : 11,822ms</text>
<circle cx="1231.4" cy="1180.5" r="6.5" fill="#d7708f" />
<text x="1241.7" y="1185.6" font-size="17.01" fill="#ffffff" textLength="229.3" lengthAdjust="spacingAndGlyphs" stroke="#ffffff" stroke-width="0.45">Document Download Time : 1ms</text>
<circle cx="1231.4" cy="1204.8" r="6.5" fill="#f2dd2e" />
<text x="1241.7" y="1209.8999999999999" font-size="17.01" fill="#ffffff" textLength="198.6" lengthAdjust="spacingAndGlyphs" stroke="#ffffff" stroke-width="0.45">Page Rendering Time : 19ms</text>
<circle cx="1231.4" cy="1229.1" r="6.5" fill="#b9c9bd" />
<text x="1241.7" y="1234.1999999999998" font-size="17.01" fill="#ffffff" textLength="260.8" lengthAdjust="spacingAndGlyphs" stroke="#ffffff" stroke-width="0.45">Document Rendering Time : 3,412ms</text>
<circle cx="1231.4" cy="1253.4" r="6.5" fill="#e8845c" />
<text x="1241.7" y="1258.5" font-size="17.01" fill="#ffffff" textLength="242.8" lengthAdjust="spacingAndGlyphs" stroke="#ffffff" stroke-width="0.45">Overall Response Time : 15,254ms</text>
<rect x="1620" y="1081.9" width="16" height="16" fill="#43b4c4" />
<text x="1645" y="1096.5" font-size="16.13" fill="#666" textLength="120.2" lengthAdjust="spacingAndGlyphs" >Redirection Time</text>
<rect x="1620" y="1104.5800000000002" width="16" height="16" fill="#2e8b74" />
<text x="1645" y="1119.18" font-size="16.13" fill="#666" textLength="72.8" lengthAdjust="spacingAndGlyphs" >DNS Time</text>
<rect x="1620" y="1127.26" width="16" height="16" fill="#0e52f5" />
<text x="1645" y="1141.86" font-size="16.13" fill="#666" textLength="120.2" lengthAdjust="spacingAndGlyphs" >Connection Time</text>
<rect x="1620" y="1149.94" width="16" height="16" fill="#a64cf0" />
<text x="1645" y="1164.54" font-size="16.13" fill="#666" textLength="86.3" lengthAdjust="spacingAndGlyphs" >Server Time</text>
<rect x="1620" y="1172.6200000000001" width="16" height="16" fill="#8200ae" />
<text x="1645" y="1187.22" font-size="16.13" fill="#666" textLength="106.8" lengthAdjust="spacingAndGlyphs" >First Byte Time</text>
<rect x="1620" y="1195.3000000000002" width="16" height="16" fill="#c84c74" />
<text x="1645" y="1209.9" font-size="16.13" fill="#666" textLength="189" lengthAdjust="spacingAndGlyphs" >Document Download Time</text>
<rect x="1620" y="1217.98" width="16" height="16" fill="#eedc00" />
<text x="1645" y="1232.58" font-size="16.13" fill="#666" textLength="155.3" lengthAdjust="spacingAndGlyphs" >Page Rendering Time</text>
<rect x="1620" y="1240.66" width="16" height="16" fill="#afd3ae" />
<text x="1645" y="1255.26" font-size="16.13" fill="#666" textLength="191.2" lengthAdjust="spacingAndGlyphs" >Document Rendering Time</text>
<rect x="1620" y="1263.3400000000001" width="16" height="16" fill="#ef8734" />
<text x="1645" y="1277.94" font-size="16.13" fill="#666" textLength="167" lengthAdjust="spacingAndGlyphs" >Overall Response Time</text></svg></body></html>
